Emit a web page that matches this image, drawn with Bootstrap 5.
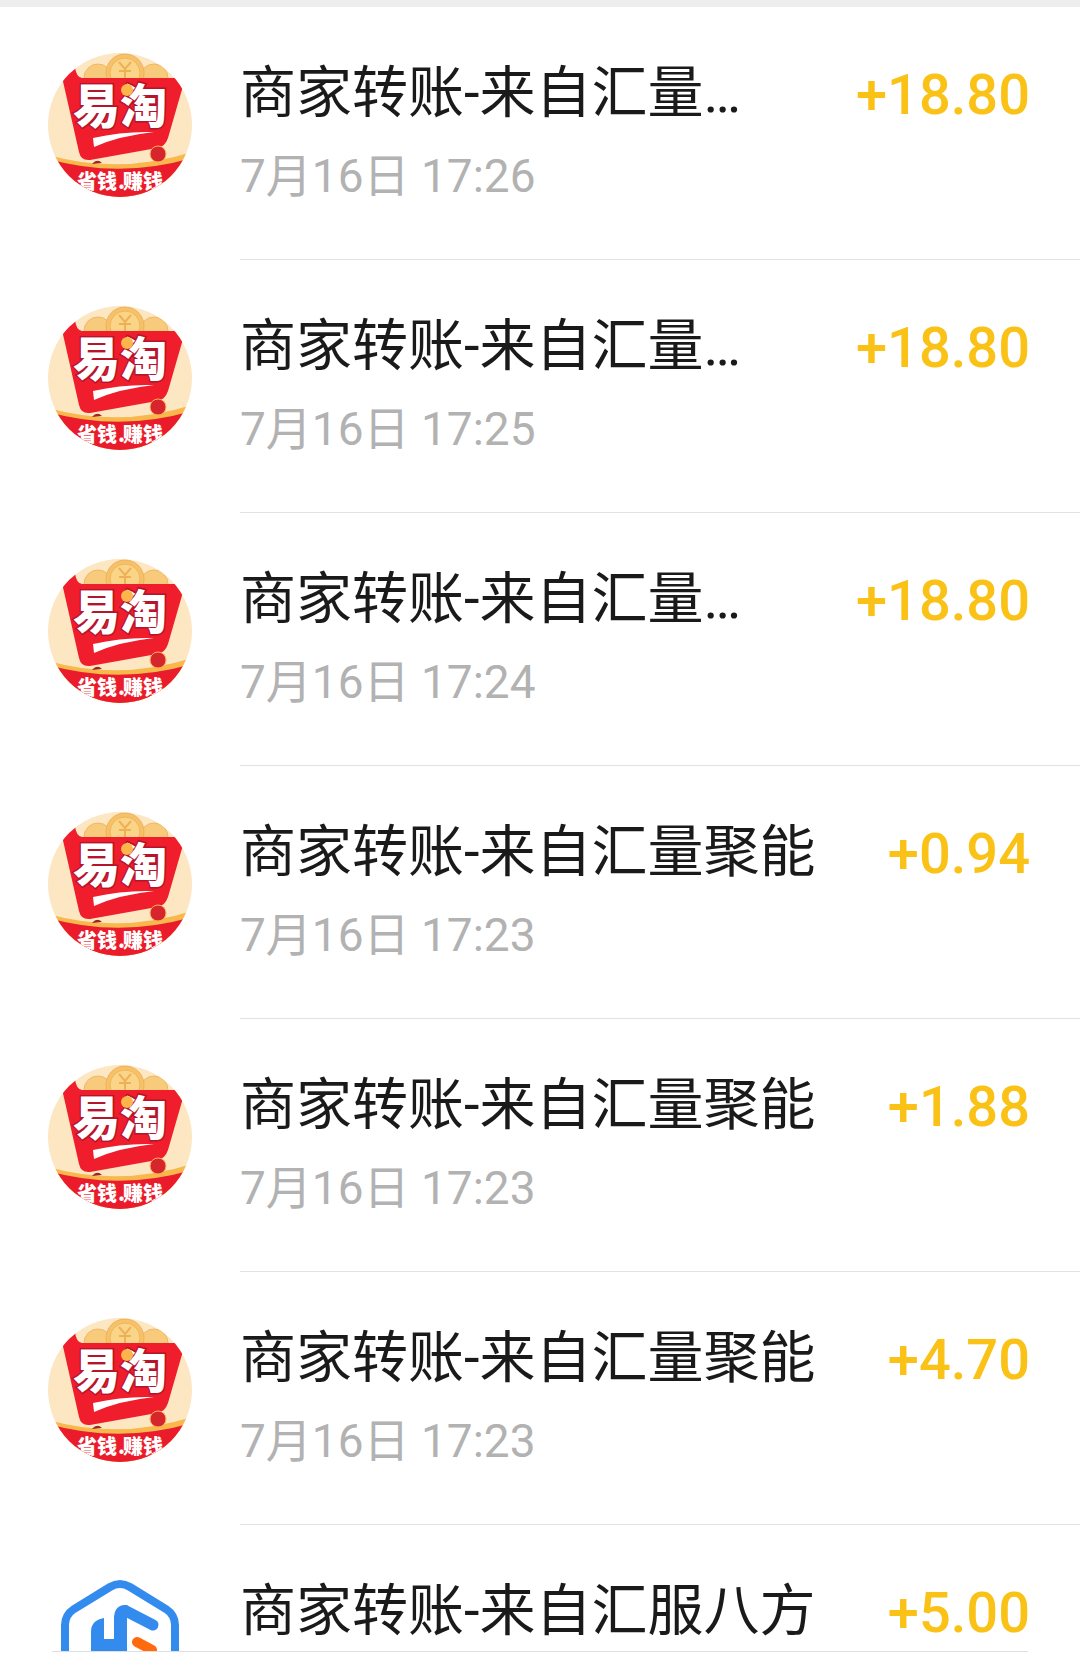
<!DOCTYPE html>
<html lang="zh-CN">
<head>
<meta charset="utf-8">
<meta name="viewport" content="width=device-width, initial-scale=1">
<title>账单</title>
<link href="https://cdn.jsdelivr.net/npm/bootstrap@5.3.0/dist/css/bootstrap.min.css" rel="stylesheet">
<style>
  body { font-family: Roboto, "Noto Sans CJK SC", sans-serif; background: #fff; color: #1a1a1a; }
  .top-strip { height: 7px; background: #eee; }
  .bill-row { gap: 48px; padding-left: 48px; }
  .bill-logo { width: 144px; height: 144px; margin-top: 46px; }
  .bill-main { padding: 50px 50px 53px 0; border-bottom: 1px solid #e2e2e2; }
  .bill-title { font-size: 56px; line-height: 72px; }
  .bill-date { font-size: 46px; line-height: 60px; margin-top: 17px; color: #b2b2b2; }
  .bill-amount { font-size: 56px; line-height: 76px; font-weight: 500; color: #fac116; }
  .bill-cut { height: 126px; overflow: hidden; }
  .bill-cut .bill-main { border: 0; }
  .bottom-line { margin: 0 52px; height: 1px; background: #dcdfe3; }
  .logo-name { font: 900 47px "Noto Sans CJK SC", sans-serif; fill: #fff; }
  .logo-slogan { font: 900 20px "Noto Sans CJK SC", sans-serif; fill: #fff; }
</style>
</head>
<body>
<svg class="d-none" aria-hidden="true">
  <symbol id="cart" viewBox="0 0 144 144">
      <rect width="144" height="144" fill="#fde6c2"/>
      <circle cx="50" cy="25" r="14" fill="#f8cb7c" stroke="#efb765"/>
      <circle cx="106" cy="25" r="14" fill="#f8cb7c" stroke="#efb765"/>
      <circle cx="77" cy="20" r="19" fill="#f6c168" stroke="#eeb15a"/>
      <circle cx="77" cy="20" r="15" fill="#fad588" stroke="#efb45c"/>
      <path d="M71 9l6 7 6-7M77 16v9M71 18h12" fill="none" stroke="#eeb056" stroke-width="2"/>
      <path d="M0 102Q72 122 144 99V144H0Z" fill="#f8b84c"/>
      <path d="M0 106Q72 126 144 105V144H0Z" fill="#ea1c2b"/>
      <path d="M14 24L27 14Q28 24 34 25H129Q137 26 135 33L120 85Q117 94 109 95L42 107Q33 108 31 99Z" fill="#f01d2c"/>
      <path d="M44 111q5-6 10-1z" fill="#9d2420"/>
      <path d="M45 85Q75 78 106 79Q70 83 46 94Z" fill="#fff"/>
      <circle cx="110" cy="101" r="8" fill="#d6252c" stroke="#f8b35a" stroke-width="1"/>
      <text class="logo-name" x="25" y="70" stroke="#b5152b" stroke-width="3" paint-order="stroke">易淘</text>
      <circle cx="79" cy="37" r="6" fill="#fbb54b"/>
      <text class="logo-slogan" x="29" y="136">省钱</text>
      <text class="logo-slogan" x="70" y="136">.</text>
      <text class="logo-slogan" x="75" y="136">赚钱</text>
  </symbol>
  <symbol id="hex" viewBox="0 0 144 144">
    <path d="M17 130V54Q17 44 26 38L62 16Q72 10 82 16L118 38Q127 44 127 54V130" fill="none" stroke="#338ced" stroke-width="8"/>
    <path d="M43 130V61Q43 49 56 47V68H66V46Q67 33 79 34L86 42L79 46V130Z" fill="#338ced"/>
    <path d="M77 39.500L105 54" stroke="#338ced" stroke-width="11" stroke-linecap="round"/>
    <path d="M89 71L104 79" stroke="#ff6a0d" stroke-width="10" stroke-linecap="round"/>
  </symbol>
</svg>

<div class="top-strip"></div>
<main>
  <ul class="list-unstyled mb-0">
    <li class="bill-row d-flex align-items-start">
      <svg class="bill-logo rounded-circle flex-shrink-0" role="img" aria-label="易淘"><use href="#cart"/></svg>
      <div class="bill-main d-flex flex-grow-1 justify-content-between align-items-start">
        <div><div class="bill-title">商家转账-来自汇量…</div><div class="bill-date">7月16日 17:26</div></div>
        <div class="bill-amount">+18.80</div>
      </div>
    </li>
    <li class="bill-row d-flex align-items-start">
      <svg class="bill-logo rounded-circle flex-shrink-0" role="img" aria-label="易淘"><use href="#cart"/></svg>
      <div class="bill-main d-flex flex-grow-1 justify-content-between align-items-start">
        <div><div class="bill-title">商家转账-来自汇量…</div><div class="bill-date">7月16日 17:25</div></div>
        <div class="bill-amount">+18.80</div>
      </div>
    </li>
    <li class="bill-row d-flex align-items-start">
      <svg class="bill-logo rounded-circle flex-shrink-0" role="img" aria-label="易淘"><use href="#cart"/></svg>
      <div class="bill-main d-flex flex-grow-1 justify-content-between align-items-start">
        <div><div class="bill-title">商家转账-来自汇量…</div><div class="bill-date">7月16日 17:24</div></div>
        <div class="bill-amount">+18.80</div>
      </div>
    </li>
    <li class="bill-row d-flex align-items-start">
      <svg class="bill-logo rounded-circle flex-shrink-0" role="img" aria-label="易淘"><use href="#cart"/></svg>
      <div class="bill-main d-flex flex-grow-1 justify-content-between align-items-start">
        <div><div class="bill-title">商家转账-来自汇量聚能</div><div class="bill-date">7月16日 17:23</div></div>
        <div class="bill-amount">+0.94</div>
      </div>
    </li>
    <li class="bill-row d-flex align-items-start">
      <svg class="bill-logo rounded-circle flex-shrink-0" role="img" aria-label="易淘"><use href="#cart"/></svg>
      <div class="bill-main d-flex flex-grow-1 justify-content-between align-items-start">
        <div><div class="bill-title">商家转账-来自汇量聚能</div><div class="bill-date">7月16日 17:23</div></div>
        <div class="bill-amount">+1.88</div>
      </div>
    </li>
    <li class="bill-row d-flex align-items-start">
      <svg class="bill-logo rounded-circle flex-shrink-0" role="img" aria-label="易淘"><use href="#cart"/></svg>
      <div class="bill-main d-flex flex-grow-1 justify-content-between align-items-start">
        <div><div class="bill-title">商家转账-来自汇量聚能</div><div class="bill-date">7月16日 17:23</div></div>
        <div class="bill-amount">+4.70</div>
      </div>
    </li>
    <li class="bill-row bill-cut d-flex align-items-start">
      <svg class="bill-logo flex-shrink-0" role="img" aria-label="汇服八方"><use href="#hex"/></svg>
      <div class="bill-main d-flex flex-grow-1 justify-content-between align-items-start">
        <div class="bill-title">商家转账-来自汇服八方</div>
        <div class="bill-amount">+5.00</div>
      </div>
    </li>
  </ul>
  <div class="bottom-line"></div>
</main>
<script src="https://cdn.jsdelivr.net/npm/bootstrap@5.3.0/dist/js/bootstrap.bundle.min.js"></script>
</body>
</html>
